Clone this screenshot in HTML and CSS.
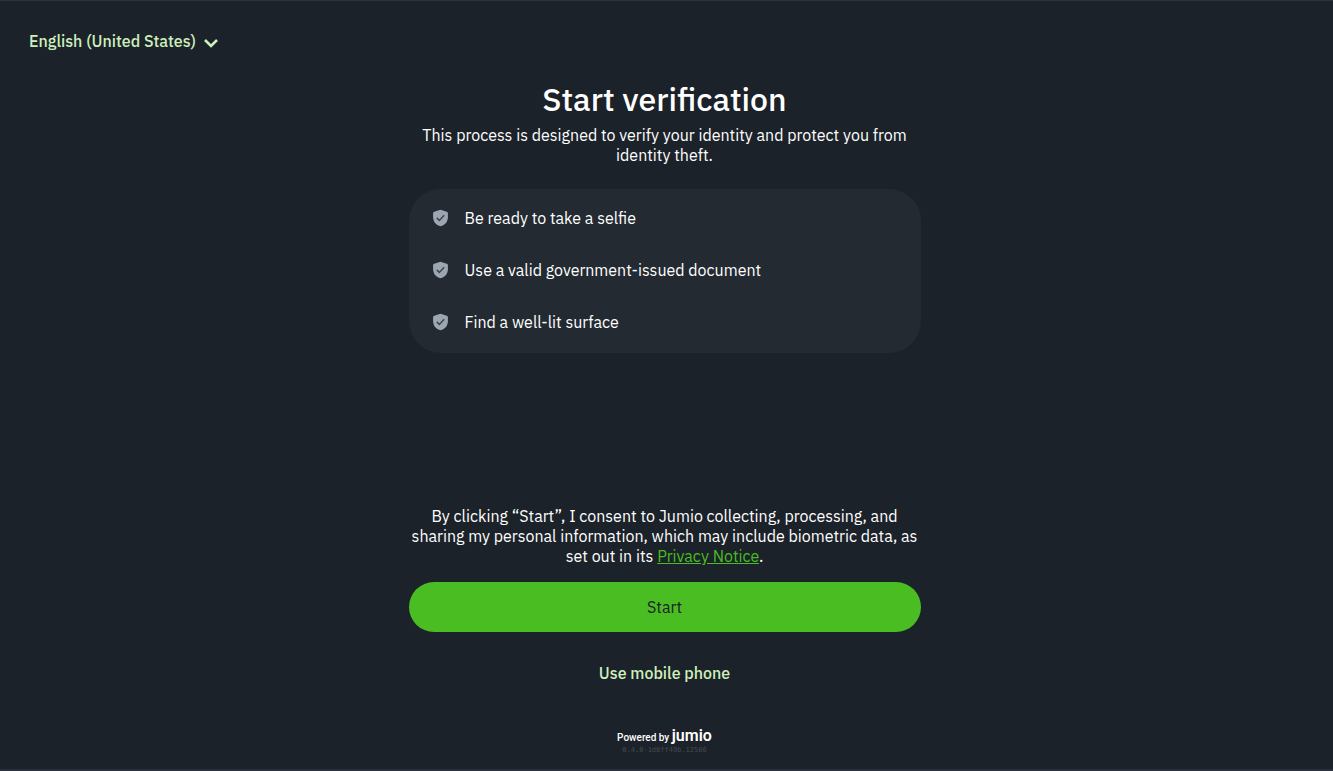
FILE: index.html
```html
<!DOCTYPE html>
<html lang="en">
<head>
    <meta charset="UTF-8">
    <meta name="viewport" content="width=device-width, initial-scale=1.0">
    <title>Start verification</title>
    <link rel="stylesheet" href="styles.css">
</head>
<body>
    <header class="topbar">
        <div class="language">
            <select id="language" class="language-select" aria-label="Language">
                <option selected>English (United States)</option>
            </select>
            <svg class="chevron" viewBox="0 0 16 16" aria-hidden="true">
                <path d="M2 5l6 6 6-6" fill="none" stroke="currentColor" stroke-width="2.6"/>
            </svg>
        </div>
    </header>

    <main class="container">
        <h1>Start verification</h1>
        <p class="intro">This process is designed to verify your identity and protect you from identity theft.</p>

        <ul class="checklist">
            <li>
                <svg class="shield" viewBox="0 0 16 18" aria-hidden="true">
                    <path d="M7.5 .7L13.8 2.7Q14.9 3.1 14.9 4.3V8.2C14.9 12.6 12.1 15.9 7.5 17.2C2.9 15.9.1 12.6.1 8.2V4.3Q.1 3.1 1.2 2.7Z" fill="#9ba6b2"/>
                    <path d="M3.8 8.9L6.3 11.4 11.2 6.2" fill="none" stroke="#3c4650" stroke-width="1.5"/>
                </svg>
                <span>Be ready to take a selfie</span>
            </li>
            <li>
                <svg class="shield" viewBox="0 0 16 18" aria-hidden="true">
                    <path d="M7.5 .7L13.8 2.7Q14.9 3.1 14.9 4.3V8.2C14.9 12.6 12.1 15.9 7.5 17.2C2.9 15.9.1 12.6.1 8.2V4.3Q.1 3.1 1.2 2.7Z" fill="#9ba6b2"/>
                    <path d="M3.8 8.9L6.3 11.4 11.2 6.2" fill="none" stroke="#3c4650" stroke-width="1.5"/>
                </svg>
                <span>Use a valid government-issued document</span>
            </li>
            <li>
                <svg class="shield" viewBox="0 0 16 18" aria-hidden="true">
                    <path d="M7.5 .7L13.8 2.7Q14.9 3.1 14.9 4.3V8.2C14.9 12.6 12.1 15.9 7.5 17.2C2.9 15.9.1 12.6.1 8.2V4.3Q.1 3.1 1.2 2.7Z" fill="#9ba6b2"/>
                    <path d="M3.8 8.9L6.3 11.4 11.2 6.2" fill="none" stroke="#3c4650" stroke-width="1.5"/>
                </svg>
                <span>Find a well-lit surface</span>
            </li>
        </ul>

        <div class="actions">
            <p class="consent">By clicking “Start”, I consent to Jumio collecting, processing, and sharing my personal information, which may include biometric data, as set out in its <a href="#">Privacy Notice</a>.</p>
            <button type="button" class="start">Start</button>
            <button type="button" class="mobile">Use mobile phone</button>
        </div>
    </main>

    <footer class="footer">
        <div class="powered">Powered by <span class="brand">jumio</span></div>
        <div class="version">0.4.0-1d8ff49b.12586</div>
    </footer>
</body>
</html>
```
FILE: styles.css
```css
* {
    box-sizing: border-box;
}
body {
    margin: 0;
    min-height: 100vh;
    display: flex;
    flex-direction: column;
    padding: 0 28px 15px 24px;
    border-top: 1px solid #2b333c;
    border-bottom: 2px solid #2b313d;
    background-color: #1c2229;
    color: #fff;
    font-family: "IBM Plex Sans", Roboto, sans-serif;
    font-size: 16px;
    font-weight: 400;
    line-height: 20px;
}
.topbar {
    display: flex;
    padding: 28px 0;
}
.language {
    display: flex;
    align-items: center;
    position: relative;
    color: #cdf0bc;
}
.language-select {
    appearance: none;
    border: none;
    background: transparent;
    color: inherit;
    font: inherit;
    font-weight: 500;
    height: 24px;
    padding: 0 27px 0 5px;
    cursor: pointer;
}
.chevron {
    position: absolute;
    right: 4px;
    top: 6px;
    width: 16px;
    height: 16px;
    pointer-events: none;
}
.container {
    flex: 1;
    display: flex;
    flex-direction: column;
    width: 100%;
    max-width: 512px;
    margin: 0 auto;
}
h1 {
    margin: 0 0 8px;
    font-size: 32px;
    font-weight: 500;
    line-height: 36px;
    text-align: center;
}
.intro {
    margin: 0 0 24px;
    text-align: center;
}
.checklist {
    list-style: none;
    margin: 0;
    padding: 3px 24px 5px;
    border-radius: 32px;
    background-color: #232a31;
}
.checklist li {
    display: flex;
    align-items: center;
    gap: 16px;
    padding: 16px 0;
}
.shield {
    width: 16px;
    height: 18px;
}
.actions {
    display: flex;
    flex-direction: column;
    margin-top: auto;
    text-align: center;
}
.consent {
    margin: 0 0 16px;
}
.consent a {
    color: #4abd22;
}
button {
    height: 50px;
    border: none;
    border-radius: 25px;
    font: inherit;
    cursor: pointer;
}
.start {
    background-color: #4abd22;
    color: #1c2229;
}
.mobile {
    margin-top: 16px;
    background: transparent;
    color: #cdf0bc;
    font-weight: 500;
}
.footer {
    margin-top: 30px;
    text-align: center;
}
.powered {
    font-family: Roboto, sans-serif;
    font-size: 10px;
    font-weight: 500;
    line-height: 16px;
}
.brand {
    font-size: 16px;
    font-weight: 600;
}
.version {
    color: #444a51;
    font-family: "DejaVu Sans Mono", monospace;
    font-size: 7px;
    font-weight: 400;
    line-height: 8px;
}
```
